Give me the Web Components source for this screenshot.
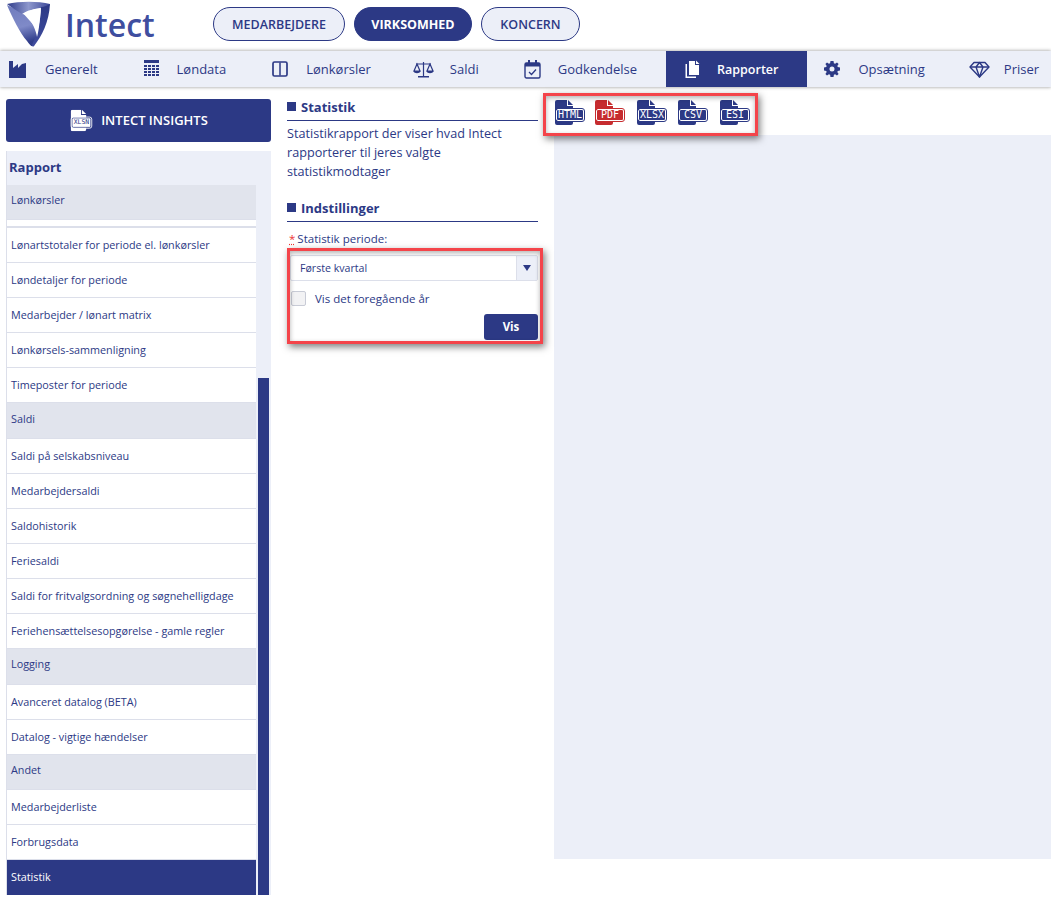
<!DOCTYPE html>
<html lang="da"><head><meta charset="utf-8"><title>Intect</title>
<style>
html,body{margin:0;padding:0;background:#fff;height:904px;overflow:hidden}
body{font-family:"Open Sans","Noto Sans",sans-serif;color:#2c3985;font-size:13px}
x-main{display:flex}
</style></head><body>
<x-topbar></x-topbar>
<x-nav></x-nav>
<x-main>
  <x-sidebar></x-sidebar>
  <x-details></x-details>
  <x-preview></x-preview>
</x-main>
<script>
const NAVY='#2c3985';
function def(name,html){customElements.define(name,class extends HTMLElement{connectedCallback(){if(this.shadowRoot)return;const r=this.attachShadow({mode:'open'});r.innerHTML=typeof html==='function'?html(this):html;}});}

def('x-pill',`<style>:host{display:inline-block}
div{box-sizing:border-box;height:34px;line-height:33px;border:1px solid ${NAVY};border-radius:17px;background:#eceff8;color:${NAVY};font-size:12.5px;font-weight:600;text-align:center}
:host([on]) div{background:${NAVY};color:#fff;font-weight:700}</style><div><slot></slot></div>`);

def('x-topbar',`<style>:host{display:flex;height:51px;box-sizing:border-box;background:#fff;align-items:flex-start}
.logo{display:flex;width:213px;height:51px;flex:none;position:relative}
svg{position:absolute;left:4px;top:0}
.w{position:absolute;left:65px;top:3px;font:600 32px/44px "Open Sans",sans-serif;color:#3f4e9f}
.p{display:flex;gap:9px;padding-top:7px}
x-pill:nth-of-type(1){width:132px}x-pill:nth-of-type(2){width:118px}x-pill:nth-of-type(3){width:99px}
</style>
<div class="logo"><svg width="56" height="50" viewBox="0 0 56 50">
<defs><linearGradient id="a" x1="0" y1="0" x2="1" y2="0"><stop offset="0" stop-color="#2f3c8a"/><stop offset=".5" stop-color="#8d97cd"/><stop offset="1" stop-color="#3a4798"/></linearGradient>
<linearGradient id="b" x1="0" y1="0" x2=".2" y2="1"><stop offset="0" stop-color="#6f7bbd"/><stop offset=".6" stop-color="#7f8ac8"/><stop offset="1" stop-color="#2f3c8a"/></linearGradient>
<linearGradient id="c" x1="0" y1="0" x2="0" y2="1"><stop offset="0" stop-color="#2c3985"/><stop offset="1" stop-color="#3f4c9e"/></linearGradient></defs>
<path d="M3 5C8 17 16 33 23 41C26 45 27 47 30 46L34 30L18 12Z" fill="url(#b)"/>
<path d="M3 4C16 1 34 1 46 4C46 6 44 7 37 8C30 9 24 10 18 14C12 10 7 7 3 4Z" fill="url(#a)"/>
<path d="M37 7C40 7 44 5 46 4C45 22 38 36 30 46C29 47 28 46 28 45C33 35 37 20 37 7Z" fill="url(#c)"/>
<path d="M18 14C24 11 30 9 36.500 8C36 20 35 30 33 37C32 30 28 22 24 17C22 15 20 14 18 14Z" fill="#fff"/>
</svg><span class="w">Intect</span></div>
<div class="p"><x-pill>MEDARBEJDERE</x-pill><x-pill on>VIRKSOMHED</x-pill><x-pill>KONCERN</x-pill></div>`);

def('x-nav-item',`<style>:host{display:flex;align-items:center;height:36px;padding:0 28px 0 17px;color:${NAVY};font-size:13px;flex:none}
:host([on]){background:${NAVY};color:#fff;font-weight:600;font-size:12.500px;padding-right:29px}
.i{width:var(--iw,34px);flex:none;display:flex;align-items:center}
</style><span class="i"><slot name="i"></slot></span><slot></slot>`);

const icons={
fac:`<svg slot="i" width="17" height="17" viewBox="0 0 17 17" style="display:block"><path d="M0 0h4v7l5-4v4l4-4 4-1v15H0z" fill="${NAVY}"/></svg>`,
cal:`<svg slot="i" width="17" height="18" viewBox="0 0 17 18" style="display:block"><path d="M1 0h15v3H1z" fill="${NAVY}"/><g fill="${NAVY}"><path d="M1 5h3v2H1zM5 5h3v2H5zM9 5h3v2H9zM13 5h3v2h-3zM1 8h3v2H1zM5 8h3v2H5zM9 8h3v2H9zM13 8h3v2h-3zM1 11h3v2H1zM5 11h3v2H5zM9 11h3v2H9zM13 11h3v2h-3zM1 14h3v2H1zM5 14h3v2H5zM9 14h3v2H9zM13 14h3v2h-3z"/></g></svg>`,
col:`<svg slot="i" width="16" height="16" viewBox="0 0 16 16" style="display:block"><rect x="1" y="1" width="14" height="14" rx="1.500" fill="none" stroke="${NAVY}" stroke-width="1.700"/><path d="M8 1.500v13" stroke="${NAVY}" stroke-width="1.500"/></svg>`,
bal:`<svg slot="i" width="21" height="17" viewBox="0 0 21 17" style="display:block;margin-left:-3px"><g fill="none" stroke="${NAVY}" stroke-width="1.200"><path d="M10.500 1v14M3 3h15"/><path d="M4 3 1 10h6zM17 3l-3 7h6z"/></g><path d="M5 15h11v1.500H5zM.5 10h7c-.5 3-6.500 3-7 0zM13.500 10h7c-.5 3-6.500 3-7 0z" fill="${NAVY}"/></svg>`,
chk:`<svg slot="i" width="17" height="19" viewBox="0 0 17 19" style="display:block"><rect x="1" y="3" width="15" height="15" rx="1.500" fill="none" stroke="${NAVY}" stroke-width="1.400"/><path d="M1 3h15v3.500H1z" fill="${NAVY}"/><path d="M4 0h2v4H4zM11 0h2v4h-2z" fill="${NAVY}"/><path d="m5 12 2.500 2.500L12 9.500" fill="none" stroke="${NAVY}" stroke-width="1.300"/></svg>`,
cop:`<svg slot="i" width="17" height="18" viewBox="0 0 17 18" style="display:block"><path d="M6 1h6v4h4v10H6z" fill="#fff"/><path d="M13 0.500l3.500 3.500h-3.500z" fill="#fff"/><path d="M4 4v12.500h9V18H2.500V4z" fill="#fff"/></svg>`,
cog:`<svg slot="i" width="16" height="16" viewBox="0 0 16 16" style="display:block"><path fill-rule="evenodd" fill="${NAVY}" d="M6.500 0h3l.4 2.200 1.200.5L13 1.400l1.600 1.600-1.300 1.900.5 1.200 2.200.4v3l-2.200.4-.5 1.200 1.300 1.900-1.600 1.600-1.900-1.300-1.200.5-.4 2.200h-3l-.4-2.200-1.200-.5L3 14.600 1.400 13l1.300-1.900-.5-1.200L0 9.500v-3l2.200-.4.5-1.200L1.400 3 3 1.400l1.900 1.300 1.200-.5zM8 5.500a2.500 2.500 0 1 0 0 5 2.500 2.500 0 0 0 0-5z"/></svg>`,
dia:`<svg slot="i" width="21" height="17" viewBox="0 0 21 17" style="display:block;margin-left:-1px"><g fill="none" stroke="${NAVY}" stroke-width="1.400" stroke-linejoin="round"><path d="M5 1.500h11l4 4.500-9.500 10L1 6z"/><path d="M1 6h19M7 6l3.500 10L14 6M7 6l3.500-4.500L14 6"/></g></svg>`
};
def('x-nav',`<style>:host{display:flex;height:36px;background:#eceff8;box-shadow:0 -1px 3px rgba(0,0,0,.22),0 1px 3px rgba(0,0,0,.22);position:relative;overflow:hidden;clip-path:inset(-4px 0 -4px 0)}
x-nav-item:first-of-type{padding-left:9px;--iw:36px}
x-nav-item.w29{padding-right:29px}
</style>
<x-nav-item>${icons.fac}Generelt</x-nav-item>
<x-nav-item class="w29">${icons.cal}Løndata</x-nav-item>
<x-nav-item>${icons.col}Lønkørsler</x-nav-item>
<x-nav-item>${icons.bal}Saldi</x-nav-item>
<x-nav-item class="w29">${icons.chk}Godkendelse</x-nav-item>
<x-nav-item on>${icons.cop}Rapporter</x-nav-item>
<x-nav-item>${icons.cog}Opsætning</x-nav-item>
<x-nav-item>${icons.dia}Priser</x-nav-item>`);

def('x-file',h=>{const c=h.getAttribute('c')||NAVY,t=h.getAttribute('t'),line=h.getAttribute('line')||'#fff',fs=h.getAttribute('fs')||10;return `<style>:host{display:block;position:relative;height:25px;width:${h.getAttribute('w')||29}px}
svg{position:absolute;left:0;top:0}
b{position:absolute;left:1px;right:0;top:9px;height:12px;box-sizing:border-box;border:1px solid ${line};border-radius:2px;background:${c};color:${line};font:400 ${fs}px/10px "DejaVu Sans Mono","Liberation Mono",monospace;text-align:center;outline:1px solid ${c};white-space:nowrap}
</style><svg width="19" height="25" viewBox="0 0 19 25"><path d="M2 0h10v6h6v17a2 2 0 0 1-2 2H2a2 2 0 0 1-2-2V2a2 2 0 0 1 2-2z" fill="${c}"/><path d="M13 0l5 5h-5z" fill="${c}"/></svg><b>${t}</b>`});

def('x-insights',`<style>:host{display:flex;align-items:center;justify-content:center;gap:8px;height:43px;background:${NAVY};border-radius:3px;color:#fff;font-size:13px;font-weight:600;line-height:41px}</style>
<x-file t="XLSN" c="#fff" line="${NAVY}" w="24" fs="7.500" style="transform:scale(.86)"></x-file><span>INTECT INSIGHTS</span>`);

def('x-rows',`<style>:host{display:block;background:#fff}</style><slot></slot>`);
def('x-row',`<style>:host{display:block;box-sizing:border-box;height:35px;line-height:34px;padding-left:4px;font-size:10.800px;color:${NAVY};background:#fff;border-bottom:1px solid #dcdfea;white-space:nowrap}
:host([g]){background:#e1e4ed;line-height:30px}
:host([on]){background:${NAVY};color:#fff;border-bottom:0}
:host([sp]){height:8px;border-bottom:2px solid #dcdfea}
</style><slot></slot>`);

def('x-sidebar',`<style>:host{display:block;flex:none;width:265px;margin-left:6px;padding-top:12px}
.p{margin-top:9px;height:744px;background:#eceff8;border-left:1px solid #dcdfea;box-sizing:border-box;display:grid;grid-template-columns:249px 1fr;grid-template-rows:34px 1fr}
h2{grid-column:1/3;margin:0;font-size:13px;font-weight:700;line-height:32px;padding-left:2px;color:${NAVY}}
.t{display:flex;flex-direction:column;padding-left:2px}
.s{margin-top:auto;width:11px;height:517px;background:${NAVY}}
</style><x-insights></x-insights>
<div class="p"><h2>Rapport</h2>
<x-rows>
<x-row g>Lønkørsler</x-row><x-row sp></x-row>
<x-row>Lønartstotaler for periode el. lønkørsler</x-row>
<x-row>Løndetaljer for periode</x-row>
<x-row>Medarbejder / lønart matrix</x-row>
<x-row>Lønkørsels-sammenligning</x-row>
<x-row>Timeposter for periode</x-row>
<x-row g style="height:36px;line-height:32px">Saldi</x-row>
<x-row>Saldi på selskabsniveau</x-row>
<x-row>Medarbejdersaldi</x-row>
<x-row>Saldohistorik</x-row>
<x-row>Feriesaldi</x-row>
<x-row>Saldi for fritvalgsordning og søgnehelligdage</x-row>
<x-row>Feriehensættelsesopgørelse - gamle regler</x-row>
<x-row g style="height:36px">Logging</x-row>
<x-row>Avanceret datalog (BETA)</x-row>
<x-row>Datalog - vigtige hændelser</x-row>
<x-row g>Andet</x-row>
<x-row>Medarbejderliste</x-row>
<x-row>Forbrugsdata</x-row>
<x-row on>Statistik</x-row>
</x-rows><div class="t"><div class="s"></div></div></div>`);

def('x-sec',`<style>:host{display:flex;align-items:center;gap:5px;height:22px;box-sizing:border-box;border-bottom:1px solid ${NAVY};color:${NAVY};font-size:13px;font-weight:700;padding-bottom:6px}
i{width:9px;height:9px;background:${NAVY};flex:none}</style><i></i><slot></slot>`);

def('x-callout',`<style>:host{display:block;position:relative}
.f{position:absolute;box-sizing:border-box;inset:var(--inset);border:3px solid #f4444a;box-shadow:2px 3px 7px rgba(0,0,0,.5),inset 0 2px 5px rgba(0,0,0,.3);pointer-events:none}
</style><slot></slot><div class="f"></div>`);

def('x-details',`<style>:host{display:block;flex:none;width:251px;margin-left:16px;padding-top:12px;color:${NAVY}}
p{margin:3px 0 0;font-size:12.650px;line-height:19px}
x-sec.b{margin-top:19px}
label{display:block;font-size:11.500px;line-height:16px;margin-top:9px;padding-left:2px}
label u{color:#e33;text-decoration:dotted underline;margin-right:2px;}
x-callout{margin:0 0 0 3px}
.sel{display:flex;height:26px;box-sizing:border-box;border:1px solid #dcdfea;border-radius:2px;font-size:10.600px;line-height:24px;padding-left:9px;align-items:stretch;margin-top:8px}
.sel span{flex:1}
.sel em{width:20px;background:#eceff8;border-left:1px solid #dcdfea;display:flex;align-items:center;justify-content:center}
.sel em::before{content:"";border:4px solid transparent;border-top:6px solid ${NAVY};border-bottom:0}
.c{display:flex;align-items:center;gap:9px;font-size:11.500px;margin-top:10px;height:15px;padding-left:1px}
.c i{width:15px;height:15px;box-sizing:border-box;border:1px solid #c8cbd6;border-radius:2px;background:#f2f2f4;flex:none}
.r{display:flex;justify-content:flex-end;margin-top:8px}
.v{width:54px;height:26px;background:${NAVY};color:#fff;font-weight:700;font-size:11.500px;line-height:26px;text-align:center;border-radius:3px}
</style>
<x-sec>Statistik</x-sec>
<p>Statistikrapport der viser hvad Intect rapporterer til jeres valgte statistikmodtager</p>
<x-sec class="b">Indstillinger</x-sec>
<label><u>*</u>Statistik periode:</label>
<x-callout style="--inset:-7px -5px -4px -3px">
<div class="sel"><span>Første kvartal</span><em></em></div>
<div class="c"><i></i><span>Vis det foregående år</span></div>
<div class="r"><div class="v">Vis</div></div>
</x-callout>`);

def('x-preview',`<style>:host{display:block;flex:1;margin-left:17px;padding-top:13px}
.i{display:flex}
.i x-file{flex:none}
.a{height:724px;margin-top:10px;margin-left:-1px;background:#eceff8}
</style>
<x-callout style="--inset:-7px 293px -11px -12px;height:25px"><div class="i">
<x-file t="HTML"></x-file><x-file t="PDF" c="#c62c2f" style="margin-left:11px"></x-file><x-file t="XLSX" style="margin-left:13px"></x-file><x-file t="CSV" style="margin-left:12px"></x-file><x-file t="ESI" style="margin-left:13px"></x-file>
</div></x-callout>
<div class="a"></div>`);
</script></body></html>
